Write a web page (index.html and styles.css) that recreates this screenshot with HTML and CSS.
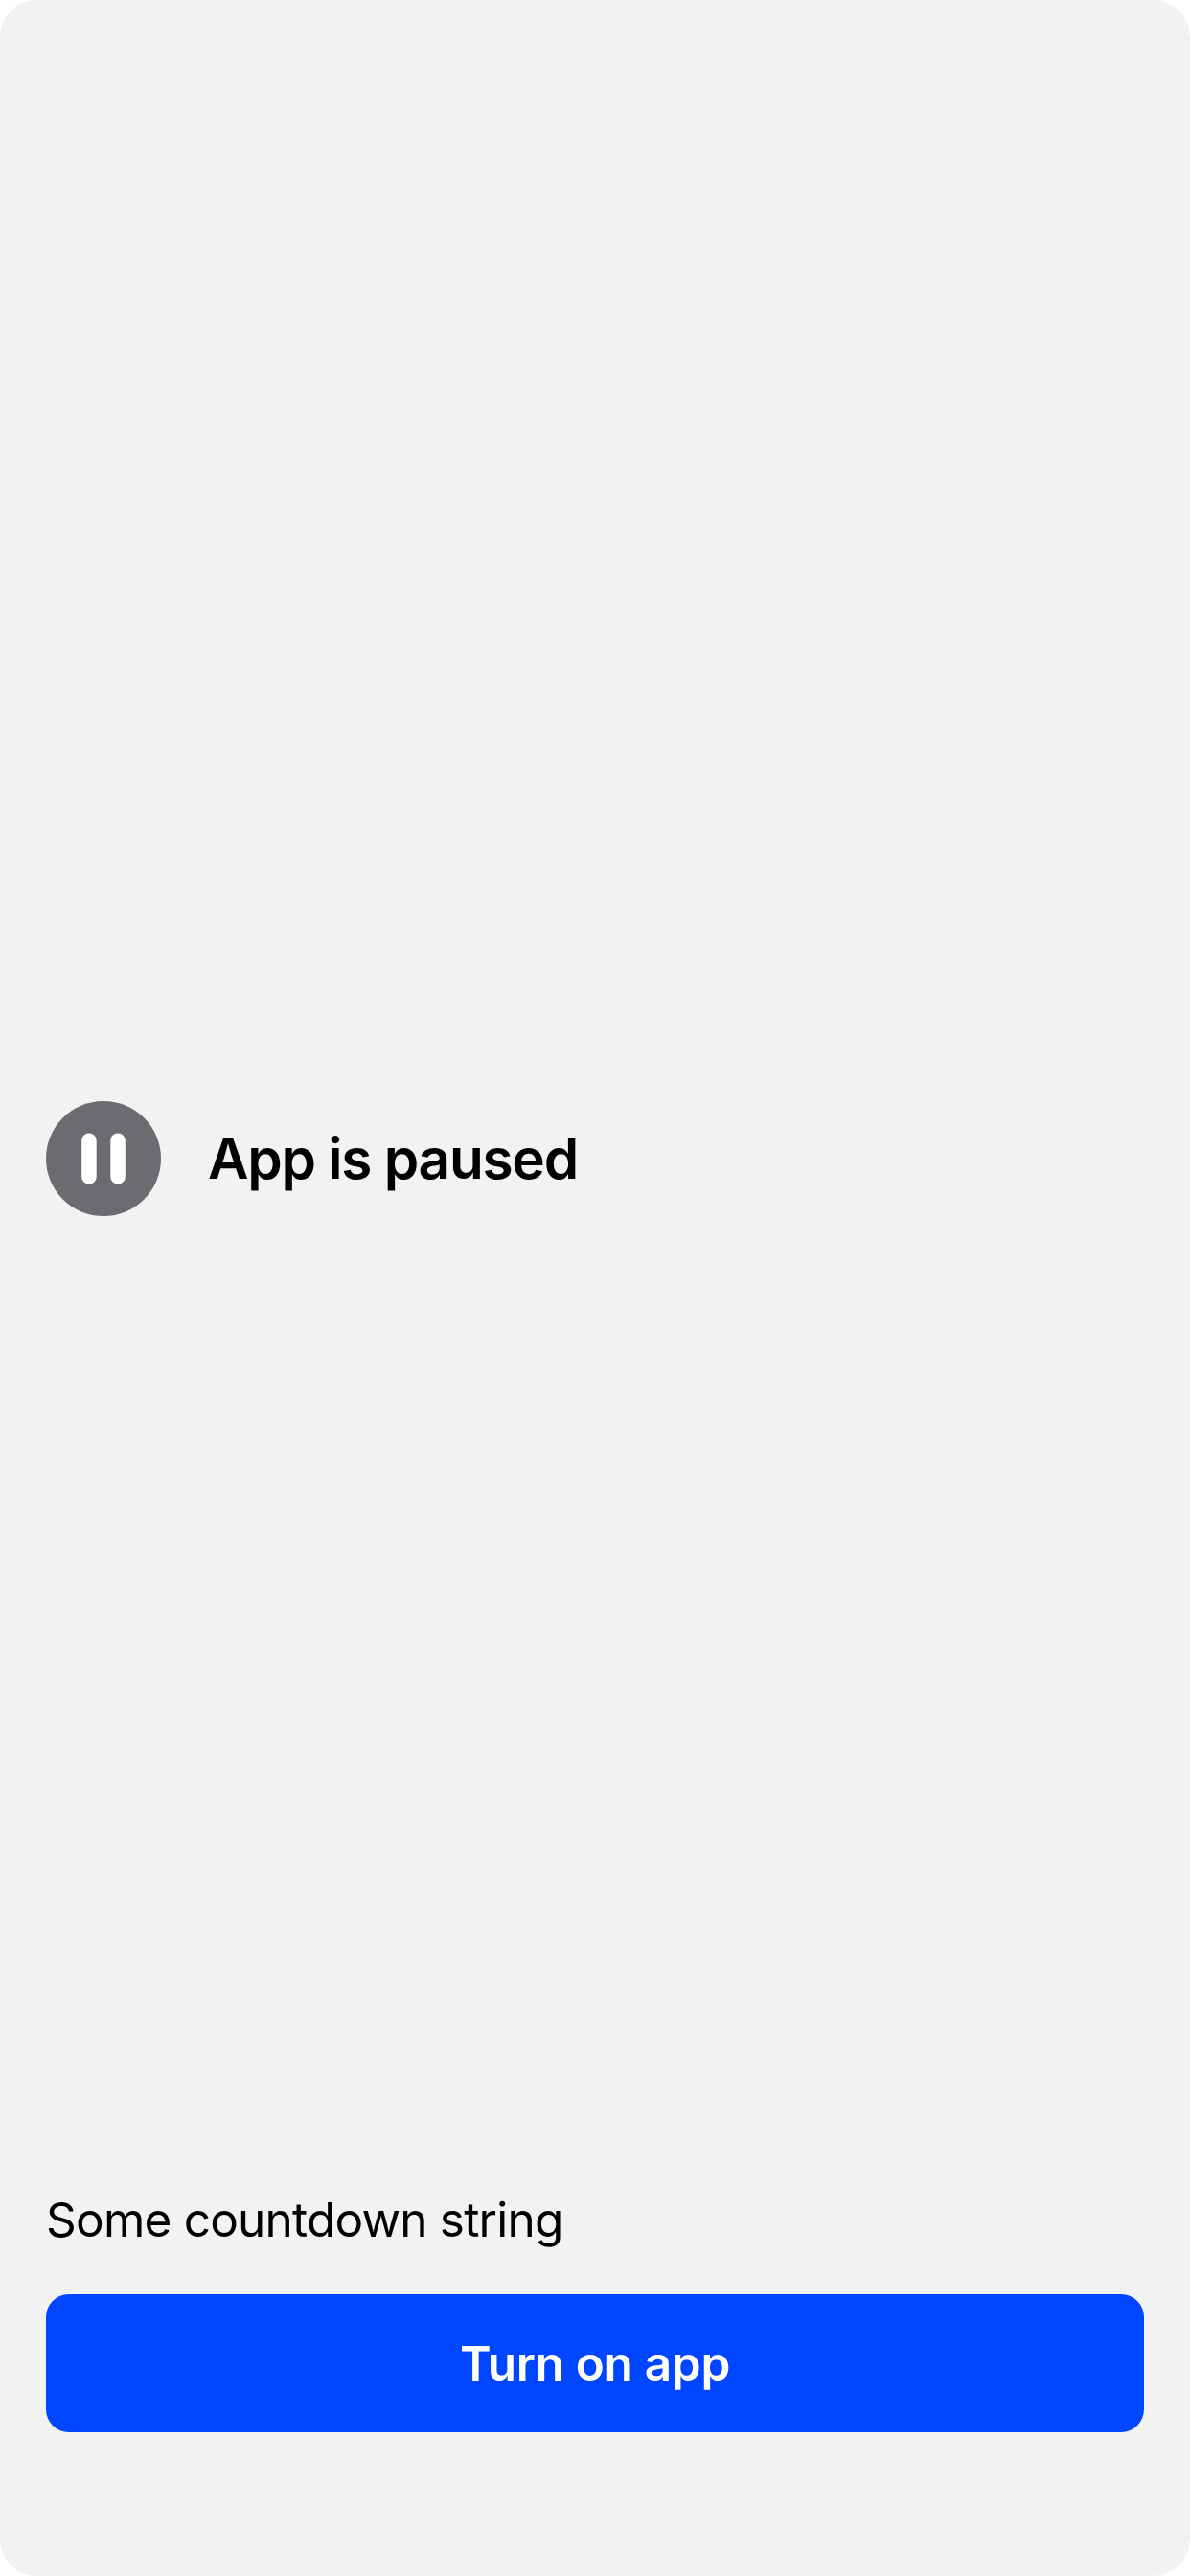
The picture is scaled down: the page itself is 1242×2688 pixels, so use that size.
FILE: index.html
```html
<!DOCTYPE html>
<html lang="en">
<head>
<meta charset="utf-8">
<title>App is paused</title>
<link rel="stylesheet" href="styles.css">
</head>
<body>
<main class="screen">
  <section class="status">
    <svg class="status-icon" viewBox="0 0 120 120" aria-hidden="true">
      <circle cx="60" cy="60" r="60" fill="#6c6b70"/>
      <rect x="37.2" y="33.6" width="15.5" height="52.8" rx="7.5" fill="#fff"/>
      <rect x="67.3" y="33.6" width="15.5" height="52.8" rx="7.5" fill="#fff"/>
    </svg>
    <h1 class="status-title">App is paused</h1>
  </section>
  <footer class="actions">
    <p class="countdown">Some countdown string</p>
    <button class="primary" type="button">Turn on app</button>
  </footer>
</main>
</body>
</html>
```

FILE: styles.css
```css
body {
  margin: 0;
  background: #fff;
  font-family: Inter, "Liberation Sans", sans-serif;
  color: #000;
}

.screen {
  box-sizing: border-box;
  height: 2688px;
  padding: 1149px 48px 150px;
  display: flex;
  flex-direction: column;
  justify-content: space-between;
  background: #f2f2f2;
  border-radius: 39px;
}

.status {
  display: flex;
  align-items: center;
  gap: 49px;
}

.status-icon {
  width: 120px;
  height: 120px;
}

.status-title {
  margin: 0;
  padding-bottom: 1px;
  font-size: 58.5px;
  line-height: 71px;
  font-weight: 600;
  letter-spacing: -1.25px;
}

.countdown {
  margin: 0 0 48px;
  font-size: 49.5px;
  line-height: 60px;
  letter-spacing: -0.78px;
}

.primary {
  display: block;
  width: 100%;
  height: 144px;
  padding: 0;
  border: 0;
  border-radius: 24px;
  background: #0045ff;
  color: #fff;
  font: 600 49.5px/60px Inter, "Liberation Sans", sans-serif;
  letter-spacing: -0.3px;
}
```
